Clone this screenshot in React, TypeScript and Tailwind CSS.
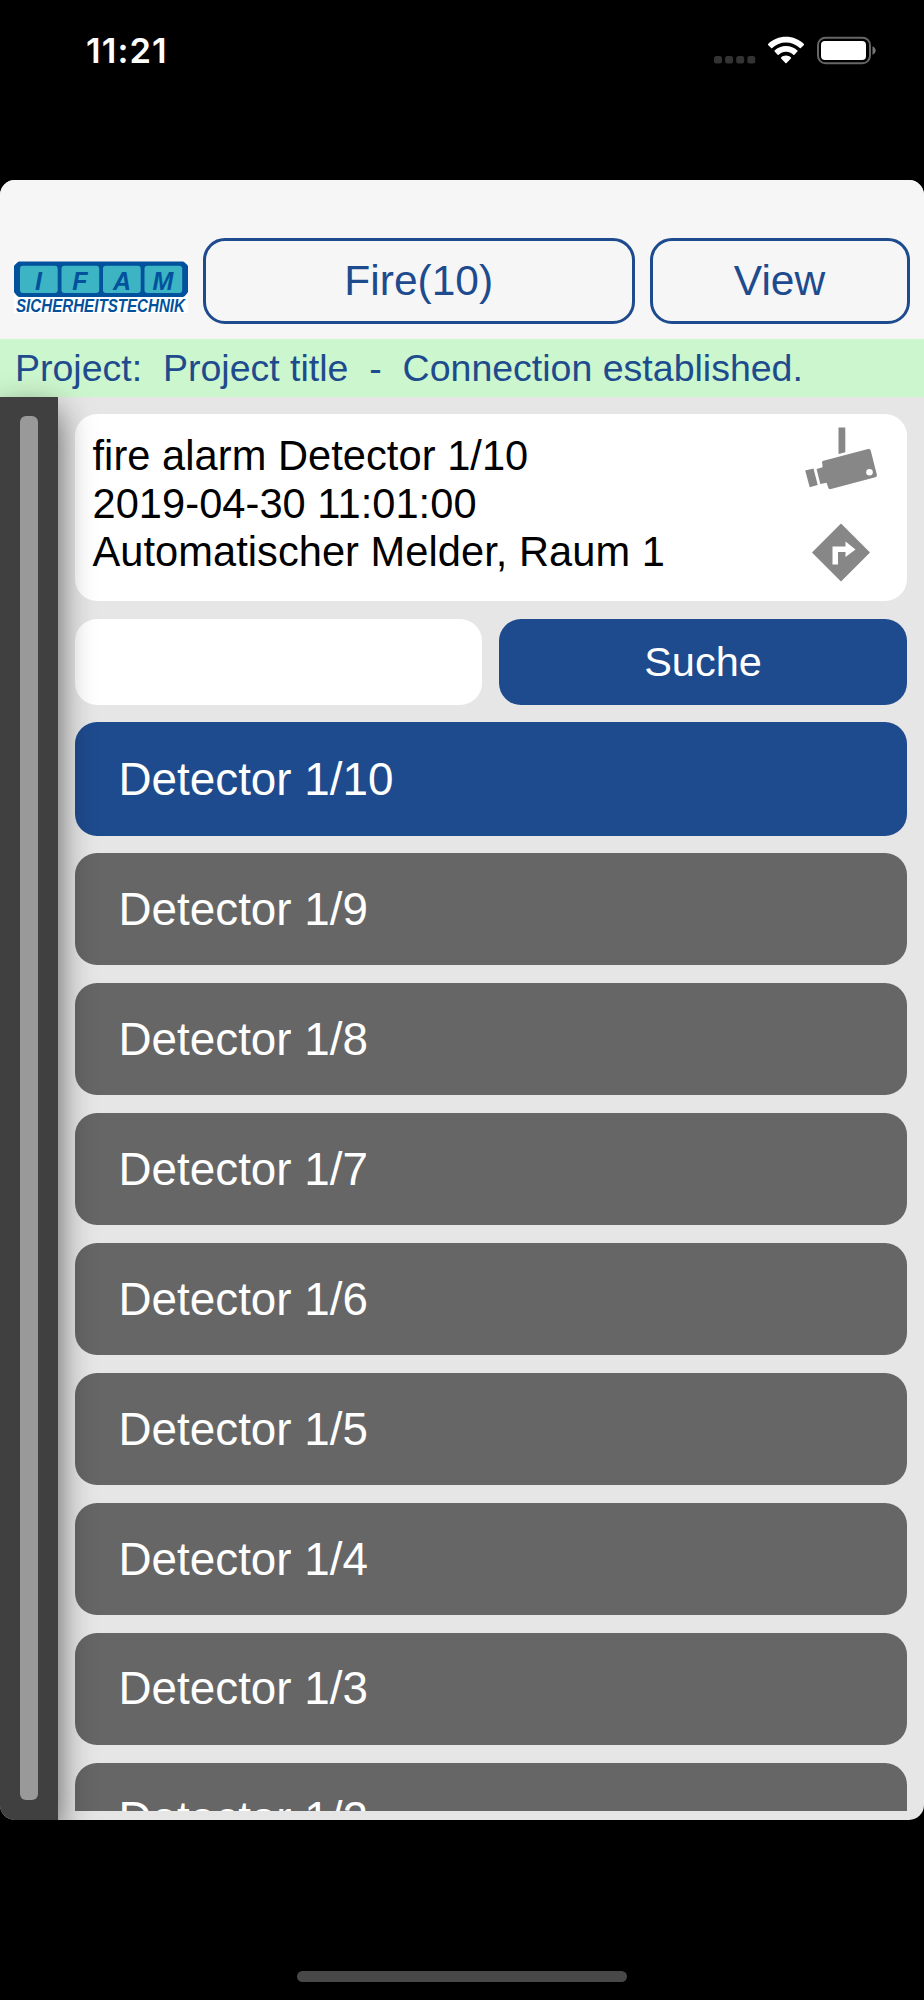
const detectors = [9, 8, 7, 6, 5, 4, 3, 2];

const logoTiles = [
  { letter: "I", x: 6, tx: 24.5 },
  { letter: "F", x: 47.5, tx: 66 },
  { letter: "A", x: 89, tx: 108 },
  { letter: "M", x: 130.5, tx: 149 },
];

function StatusBar() {
  return (
    <div className="flex h-[180px] shrink-0 items-start justify-between pl-[86px] pr-[47px] pt-[30px]">
      <div className="font-['Inter',sans-serif] text-[34.500px] font-semibold leading-[41px] tracking-[1.100px] text-white">
        11:21
      </div>
      <svg width="163" height="30" viewBox="714 36 163 30" className="mt-1.5">
        {/* Signal */}
        <g fill="#333333">
          <rect x="714" y="56" width="8" height="7.5" rx="2.5" />
          <rect x="725.1" y="56" width="8" height="7.5" rx="2.5" />
          <rect x="736.2" y="56" width="8" height="7.5" rx="2.5" />
          <rect x="747.3" y="56" width="8" height="7.5" rx="2.5" />
        </g>
        {/* Wifi */}
        <g fill="#ffffff">
          <path d="M786 36.8c7 0 13.3 2.7 17.9 7.1.3.3.3.8 0 1.100l-3 3.100c-.3.300-.8.300-1.100 0-3.700-3.500-8.500-5.500-13.800-5.500s-10.100 2-13.800 5.500c-.3.300-.8.300-1.100 0l-3-3.100c-.3-.3-.3-.8 0-1.100 4.600-4.400 10.900-7.100 17.900-7.100z" />
          <path d="M786 46c4.400 0 8.400 1.700 11.400 4.500.3.300.3.800 0 1.100l-3 3.100c-.3.300-.8.300-1.100 0-1.900-1.800-4.500-2.900-7.300-2.900s-5.400 1.100-7.300 2.900c-.3.300-.8.300-1.100 0l-3-3.100c-.3-.3-.3-.8 0-1.100 3-2.800 7-4.500 11.400-4.500z" />
          <path d="M786 55.600c1.900 0 3.600.7 4.900 1.800.3.300.3.700 0 1l-4.300 4.600c-.3.400-.9.400-1.200 0l-4.300-4.600c-.3-.3-.3-.7 0-1 1.300-1.100 3-1.800 4.900-1.800z" />
        </g>
        {/* Battery */}
        <rect x="818" y="37.7" width="52" height="25.6" rx="7.5" fill="none" stroke="#666666" strokeWidth="2" />
        <rect x="821" y="41" width="45" height="19" rx="4" fill="#ffffff" />
        <path d="M872.5 46.3c1.900.8 3.200 2.400 3.200 4.200s-1.300 3.400-3.200 4.200z" fill="#777777" />
      </svg>
    </div>
  );
}

function Logo() {
  return (
    <svg width="174" height="52" viewBox="0 0 174 52" className="shrink-0">
      <rect y="0.5" width="174" height="51.5" fill="#ffffff" />
      <path d="M5 0.5H169Q171 1 174 5V31Q171 35.500 169 36H5Q3 35.500 0 31V5Q3 1 5 0.500Z" fill="#02519c" />
      <g fontFamily="Liberation Sans, sans-serif" fontWeight="bold" fontStyle="italic" fill="#02519c">
        {logoTiles.map((tile) => (
          <g key={tile.letter}>
            <rect x={tile.x} y="4.7" width="37.7" height="27.3" rx="3" fill="#3cb4c4" />
            <text x={tile.tx} y="28.7" fontSize="25" textAnchor="middle">
              {tile.letter}
            </text>
          </g>
        ))}
        <text x="2" y="51" fontSize="18" textLength="169" lengthAdjust="spacingAndGlyphs">
          SICHERHEITSTECHNIK
        </text>
      </g>
    </svg>
  );
}

function CameraIcon() {
  return (
    <svg width="74" height="64" viewBox="0 0 74 64" fill="#878787">
      <path d="M34.5 0.5H41.3V25.3L34.5 27Z" />
      <path d="M18.3 36.5C17.7 35 18.2 34 19.5 33.7L64 22C65.4 21.6 66.3 22.2 66.7 23.6L72.8 47.5C73.1 49 72.7 49.8 71.3 50.2L27 62C25.6 62.4 24.6 61.9 24.2 60.6L22.6 55.8L16.3 57L12.6 41.9L18.6 40.3Z" />
      <path d="M1.2 43.6L9.5 41.6L13.7 58.1L5.7 60.2Z" />
      <circle cx="65.5" cy="45.3" r="3.3" fill="#ffffff" />
    </svg>
  );
}

function DirectionsIcon() {
  return (
    <svg width="58" height="59" viewBox="0 0 58 59">
      <path d="M29 1.5L57 29.5L29 57.5L1 29.5Z" fill="#878787" stroke="#878787" strokeWidth="1.5" strokeLinejoin="round" />
      <path d="M20.5 41.5V23.5H33.5V18.5L43.5 26.5L33.5 34V29H26V41.5Z" fill="#ffffff" />
    </svg>
  );
}

export default function App() {
  return (
    <div className="flex h-[2000px] w-[924px] flex-col bg-black font-['Liberation_Sans',Arial,sans-serif]">
      <StatusBar />

      <div className="flex h-[1639.7px] shrink-0 flex-col overflow-hidden rounded-[15px] bg-[#e6e6e6]">
        {/* Header */}
        <header className="flex h-[158.7px] shrink-0 bg-[#f6f6f6] px-[14px] pt-[57.5px] text-[42.5px] text-[#1e4b8d]">
          <div className="pt-[23px]">
            <Logo />
          </div>
          <button className="ml-[14.5px] h-[86.5px] w-[432.5px] rounded-[22px] border-3 border-[#1e4b8d]">
            Fire(10)
          </button>
          <button className="ml-[14.5px] h-[86.5px] w-[260px] rounded-[22px] border-3 border-[#1e4b8d]">
            View
          </button>
        </header>

        <div className="flex h-[58.3px] shrink-0 items-center whitespace-pre bg-[#ccf6cd] pl-[15px] pt-px text-[37.5px] text-[#1e4b8d]">
          Project:  Project title  -  Connection established.
        </div>

        <div className="flex min-h-0 flex-1">
          {/* Sidebar */}
          <aside className="relative z-10 flex w-[58px] shrink-0 justify-center bg-[#404040] pb-[19.7px] pt-[19.5px] shadow-[0_14px_34px_rgba(0,0,0,0.62)]">
            <div className="w-[17.5px] rounded-[6px] bg-[#999999]" />
          </aside>

          <main className="mb-[8.3px] flex flex-1 flex-col overflow-hidden pl-[17px] pr-[17.3px] pt-[17px]">
            {/* Alarm details */}
            <section className="flex h-[187px] shrink-0 justify-between rounded-[22px] bg-white pl-[17.5px] pt-[17.8px]">
              <div className="whitespace-nowrap text-[41.6px] leading-[48px] tracking-[0.05px] text-black">
                <p>fire alarm Detector 1/10</p>
                <p>2019-04-30 11:01:00</p>
                <p>Automatischer Melder, Raum 1</p>
              </div>
              <div className="mr-[29px] -mt-[4.5px] flex flex-col items-center">
                <CameraIcon />
                <div className="mt-[31.5px]">
                  <DirectionsIcon />
                </div>
              </div>
            </section>

            {/* Search */}
            <div className="mt-[18px] flex h-[86.5px] shrink-0 gap-[17.3px] text-[41.5px]">
              <input className="w-[407px] rounded-[22px] bg-white px-4 outline-none" />
              <button className="flex-1 rounded-[22px] bg-[#1e4b8d] text-white">Suche</button>
            </div>

            {/* Detectors */}
            <div className="mt-[16.5px] flex flex-col gap-[17.5px] text-[45.8px] text-white">
              <div className="-mb-[0.5px] flex h-[114px] shrink-0 items-center rounded-[22px] bg-[#1e4b8d] pl-[43.5px] pt-0.5">
                Detector 1/10
              </div>
              {detectors.map((n) => (
                <div key={n} className="flex h-[112.45px] shrink-0 items-center rounded-[22px] bg-[#666666] pl-[43.5px] pt-0.5">
                  Detector 1/{n}
                </div>
              ))}
            </div>
          </main>
        </div>
      </div>

      {/* Home indicator */}
      <div className="mx-auto mt-[151.3px] h-[11px] w-[330px] rounded-full bg-[#484848]" />
    </div>
  );
}
